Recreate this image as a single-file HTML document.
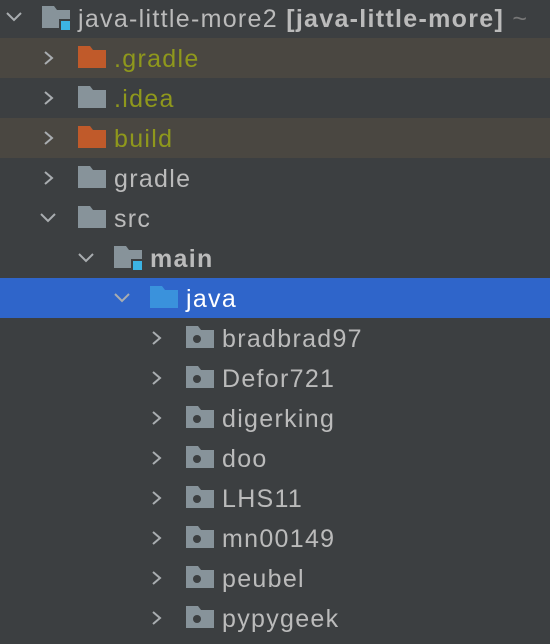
<!DOCTYPE html>
<html><head><meta charset="utf-8"><style>
body{margin:0;width:550px;height:644px;background:#3c3f41;overflow:hidden;font-family:"Liberation Sans",sans-serif;font-size:25px;letter-spacing:1.3px;color:#bbbbbb;position:relative}
.r{position:absolute;left:0;width:550px;height:40px}
.t{position:absolute;top:1px;line-height:40px;white-space:nowrap}
.i{position:absolute}
.hl{background:#4a4741}
.sel{background:#2f65ca}
.y{color:#8f981c}
</style></head><body>
<svg width="0" height="0" style="position:absolute"><defs>
<symbol id="rc" viewBox="0 0 12 14"><path d="M2 1 L9 7 L2 13" fill="none" stroke="#a9adb0" stroke-width="2"/></symbol>
<symbol id="dc" viewBox="0 0 16 10"><path d="M1 1 L8 8 L15 1" fill="none" stroke="#a9adb0" stroke-width="2"/></symbol>
</defs></svg>

<div class="r" style="top:-2px">
<svg class="i" style="left:6px;top:14px" width="16" height="10"><use href="#dc"/></svg>
<svg class="i" style="left:42px;top:8px" width="30" height="26"><path d="M0 0h12l3 4h13v18H0z" fill="#87939a"/><rect x="18" y="14" width="11" height="11" fill="#3cb4e4" stroke="#3c3f41" stroke-width="2"/></svg>
<div class="t" style="left:78px">java-little-more2 <b>[java-little-more]</b> <span style="color:#777">~</span></div>
</div>
<div class="r hl" style="top:38px">
<svg class="i" style="left:43px;top:13px" width="12" height="14"><use href="#rc"/></svg>
<svg class="i" style="left:78px;top:8px" width="28" height="22"><path d="M0 0h12l3 4h13v18H0z" fill="#c05a2a"/></svg>
<div class="t y" style="left:114px">.gradle</div></div>
<div class="r" style="top:78px">
<svg class="i" style="left:43px;top:13px" width="12" height="14"><use href="#rc"/></svg>
<svg class="i" style="left:78px;top:8px" width="28" height="22"><path d="M0 0h12l3 4h13v18H0z" fill="#87939a"/></svg>
<div class="t y" style="left:114px">.idea</div></div>
<div class="r hl" style="top:118px">
<svg class="i" style="left:43px;top:13px" width="12" height="14"><use href="#rc"/></svg>
<svg class="i" style="left:78px;top:8px" width="28" height="22"><path d="M0 0h12l3 4h13v18H0z" fill="#c05a2a"/></svg>
<div class="t y" style="left:114px">build</div></div>
<div class="r" style="top:158px">
<svg class="i" style="left:43px;top:13px" width="12" height="14"><use href="#rc"/></svg>
<svg class="i" style="left:78px;top:8px" width="28" height="22"><path d="M0 0h12l3 4h13v18H0z" fill="#87939a"/></svg>
<div class="t" style="left:114px">gradle</div></div>
<div class="r" style="top:198px">
<svg class="i" style="left:40px;top:15px" width="16" height="10"><use href="#dc"/></svg>
<svg class="i" style="left:78px;top:8px" width="28" height="22"><path d="M0 0h12l3 4h13v18H0z" fill="#87939a"/></svg>
<div class="t" style="left:114px">src</div></div>
<div class="r" style="top:238px">
<svg class="i" style="left:78px;top:15px" width="16" height="10"><use href="#dc"/></svg>
<svg class="i" style="left:114px;top:8px" width="30" height="26"><path d="M0 0h12l3 4h13v18H0z" fill="#87939a"/><rect x="18" y="14" width="11" height="11" fill="#3cb4e4" stroke="#3c3f41" stroke-width="2"/></svg>
<div class="t" style="left:150px;font-weight:bold">main</div></div>
<div class="r sel" style="top:278px">
<svg class="i" style="left:114px;top:15px" width="16" height="10"><use href="#dc"/></svg>
<svg class="i" style="left:150px;top:8px" width="28" height="22"><path d="M0 0h12l3 4h13v18H0z" fill="#3a92dc"/></svg>
<div class="t" style="left:186px;color:#fff">java</div></div>

<div id="pk"></div>
<script>
var n=["bradbrad97","Defor721","digerking","doo","LHS11","mn00149","peubel","pypygeek"],h="";
n.forEach(function(s,k){var t=318+40*k;
h+='<div class="r" style="top:'+t+'px"><svg class="i" style="left:151px;top:13px" width="12" height="14"><use href="#rc"/></svg><svg class="i" style="left:186px;top:8px" width="28" height="22"><path d="M0 0h12l3 4h13v18H0z" fill="#87939a"/><circle cx="11" cy="13" r="4" fill="#3c3f41"/></svg><div class="t" style="left:222px">'+s+'</div></div>';});
document.getElementById("pk").innerHTML=h;
</script>
</body></html>
